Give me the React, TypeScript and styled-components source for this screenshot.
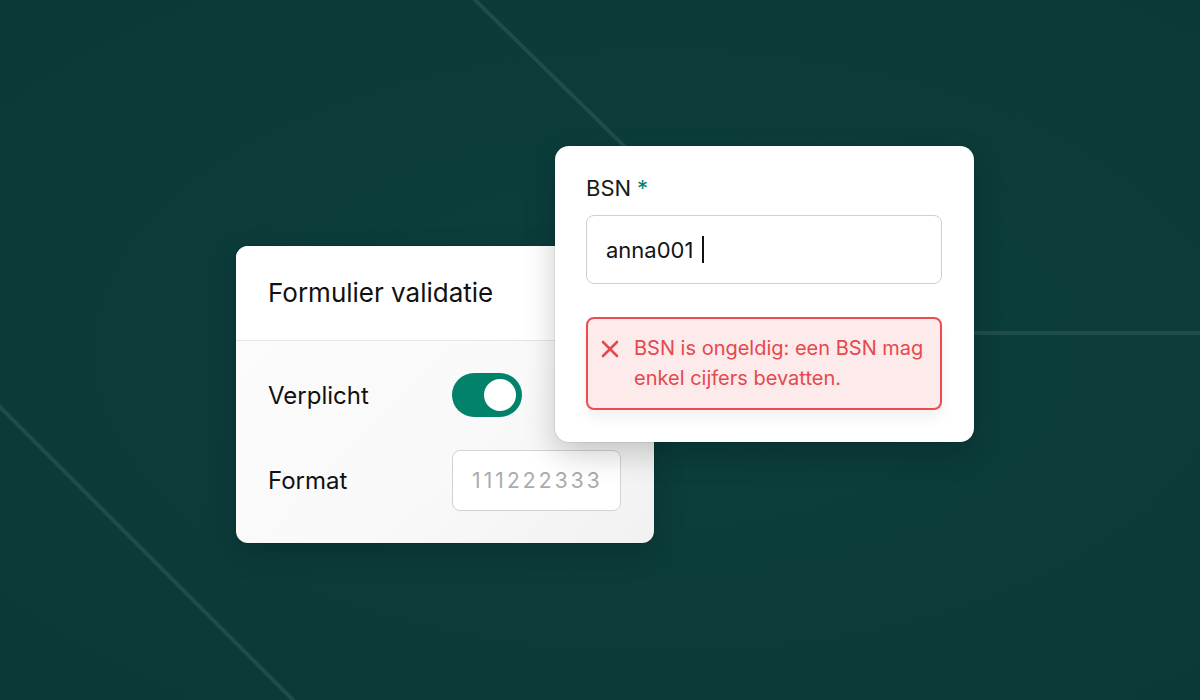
import styled, { createGlobalStyle } from 'styled-components';

const GlobalStyle = createGlobalStyle`
  * {
    box-sizing: border-box;
  }

  body {
    margin: 0;
    font-family: Inter, 'Noto Sans', sans-serif;
    background-color: #0b3c3a;
  }
`;

const Page = styled.main`
  position: relative;
  width: 1200px;
  height: 700px;
  overflow: hidden;
  background: radial-gradient(ellipse at 55% 50%, #0c3f3c 0%, #0b3c3a 60%, #0a3a38 100%);
`;

const Lines = styled.svg`
  position: absolute;
  inset: 0;
  z-index: 0;
`;

const Stage = styled.div`
  position: relative;
  z-index: 1;
  display: flex;
  align-items: flex-start;
  padding-left: 236px;
`;

const SettingsCard = styled.section`
  width: 418px;
  margin-top: 246px;
  border-radius: 12px;
  overflow: hidden;
  background: linear-gradient(135deg, #fcfcfc 0%, #f9f9f9 60%, #f1f1f1 100%);
  box-shadow: 0 0 0 1px rgba(0, 0, 0, 0.08), 0 10px 30px rgba(0, 0, 0, 0.18);
`;

const CardHeader = styled.header`
  height: 95px;
  display: flex;
  align-items: center;
  padding: 0 32px 2px;
  background-color: #ffffff;
  border-bottom: 1px solid #e6e6e6;

  h2 {
    margin: 0;
    font-size: 26px;
    font-weight: 400;
    color: #111111;
  }
`;

const SettingsBody = styled.div`
  display: grid;
  grid-template-columns: 184px auto;
  row-gap: 33px;
  align-items: center;
  padding: 32px;
`;

const RowLabel = styled.span`
  font-size: 24px;
  color: #111111;
`;

const Toggle = styled.div<{ $on: boolean }>`
  width: 70px;
  height: 44px;
  border-radius: 22px;
  padding: 6px;
  display: flex;
  justify-content: ${(props) => (props.$on ? 'flex-end' : 'flex-start')};
  background-color: ${(props) => (props.$on ? '#02826a' : '#cfcfcf')};

  span {
    width: 32px;
    height: 32px;
    border-radius: 50%;
    background-color: #ffffff;
  }
`;

const FormatBox = styled.div`
  width: 169px;
  height: 61px;
  display: flex;
  align-items: center;
  padding-left: 19px;
  border: 1px solid #d3d3d3;
  border-radius: 8px;
  background-color: #ffffff;
  font-size: 21px;
  letter-spacing: 3.1px;
  color: #ababab;
`;

const FieldCard = styled.section`
  width: 419px;
  margin-top: 146px;
  margin-left: -99px;
  padding: 30px 32px 32px 31px;
  border-radius: 14px;
  background-color: #ffffff;
  box-shadow: 0 0 0 1px rgba(0, 0, 0, 0.06), 0 12px 32px rgba(0, 0, 0, 0.2);
`;

const FieldLabel = styled.label`
  display: block;
  font-size: 22px;
  line-height: 24px;
  color: #1a1a1a;

  em {
    font-style: normal;
    color: #02826a;
    margin-left: 6px;
  }
`;

const TextInput = styled.div`
  height: 69px;
  margin-top: 15px;
  display: flex;
  align-items: center;
  padding-left: 19px;
  border: 1px solid #d0d0d0;
  border-radius: 8px;
  font-size: 22px;
  color: #141414;
`;

const Caret = styled.span`
  width: 2px;
  height: 27px;
  margin-left: 9px;
  background-color: #111111;
`;

const ErrorBox = styled.div`
  margin-top: 33px;
  display: flex;
  align-items: flex-start;
  gap: 15px;
  padding: 14px 14px 15px 13px;
  border: 2px solid #ee4b4f;
  border-radius: 8px;
  background-color: #fdeaeb;
  box-shadow: 0 8px 14px rgba(0, 0, 0, 0.06);
  color: #e5484d;
  font-size: 20px;
  line-height: 30px;

  svg {
    flex-shrink: 0;
    margin-top: 7px;
  }
`;

const App = () => (
  <>
    <GlobalStyle />
    <Page>
      <Lines width="1200" height="700" viewBox="0 0 1200 700">
        <g stroke="#1f4d4a" strokeWidth="4" fill="none">
          <line x1="473" y1="-2" x2="720" y2="240" />
          <line x1="-2" y1="405" x2="295" y2="702" />
          <line x1="940" y1="333" x2="1202" y2="333" />
        </g>
      </Lines>
      <Stage>
        <SettingsCard>
          <CardHeader>
            <h2>Formulier validatie</h2>
          </CardHeader>
          <SettingsBody>
            <RowLabel>Verplicht</RowLabel>
            <Toggle $on>
              <span />
            </Toggle>
            <RowLabel>Format</RowLabel>
            <FormatBox>111222333</FormatBox>
          </SettingsBody>
        </SettingsCard>
        <FieldCard>
          <FieldLabel>
            BSN
            <em>*</em>
          </FieldLabel>
          <TextInput>
            anna001
            <Caret />
          </TextInput>
          <ErrorBox>
            <svg width="18" height="18" viewBox="0 0 18 18">
              <path d="M2 2 L16 16 M16 2 L2 16" stroke="#e5484d" strokeWidth="2.6" strokeLinecap="round" />
            </svg>
            <span>BSN is ongeldig: een BSN mag enkel cijfers bevatten.</span>
          </ErrorBox>
        </FieldCard>
      </Stage>
    </Page>
  </>
);

export default App;
